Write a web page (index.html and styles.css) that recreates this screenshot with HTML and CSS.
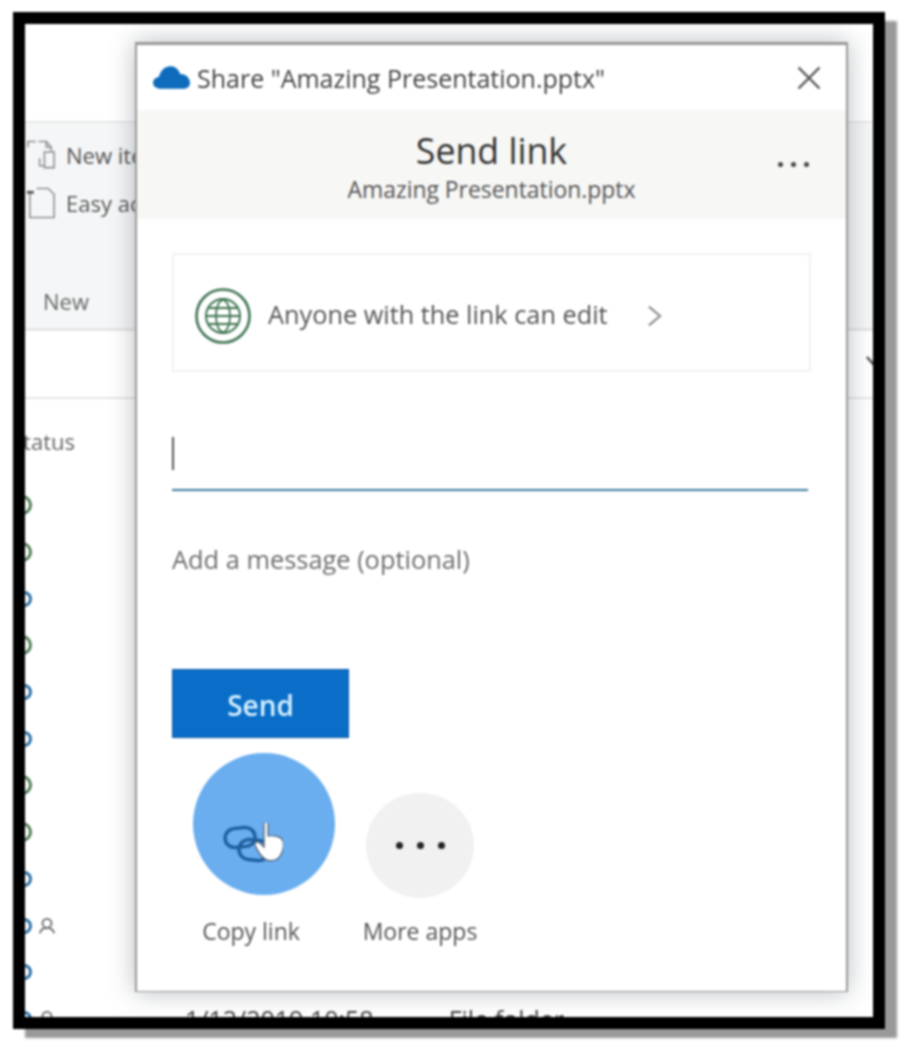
FILE: index.html
```html
<!DOCTYPE html>
<html lang="en">
<head>
<meta charset="utf-8">
<title>Share</title>
<link rel="stylesheet" href="styles.css">
</head>
<body>
<div class="frame">
  <div class="explorer">
    <div class="top-space"></div>
    <section class="ribbon">
      <div class="ribbon-items">
        <div class="ribbon-item">
          <svg class="ribbon-icon" viewBox="0 0 34 34" fill="none" stroke="#8a8f94" stroke-width="1.6"><path d="M3 9V3h8M14 3h8l5 6v4M20 14h10v16H20zM15 20v8h5"/><path d="M22 3v6h5" /></svg>
          <span>New item</span>
        </div>
        <div class="ribbon-item">
          <svg class="ribbon-icon" viewBox="0 0 34 34" fill="none" stroke="#8a8f94" stroke-width="1.6"><path d="M5 7V32H30V8L24 2H12"/><path d="M2 6h7" stroke="#555" stroke-width="3"/></svg>
          <span>Easy access</span>
        </div>
      </div>
      <div class="ribbon-label">New</div>
    </section>
    <div class="path-bar">
      <svg class="path-chevron" viewBox="0 0 20 14" fill="none" stroke="#555" stroke-width="2.6"><path d="M2 2l8 9 8-9"/></svg>
    </div>
    <div class="column-head">Status</div>
    <div class="rows">
      <div class="row"><i class="dot green"></i></div>
      <div class="row"><i class="dot green"></i></div>
      <div class="row"><i class="dot blue"></i></div>
      <div class="row"><i class="dot green"></i></div>
      <div class="row"><i class="dot blue"></i></div>
      <div class="row"><i class="dot blue"></i></div>
      <div class="row"><i class="dot green"></i></div>
      <div class="row"><i class="dot green"></i></div>
      <div class="row"><i class="dot blue"></i></div>
      <div class="row"><i class="dot blue"></i><svg class="person" viewBox="0 0 20 20" fill="none" stroke="#666" stroke-width="2"><circle cx="10" cy="7" r="5"/><path d="M2 18c1-4 4-6 8-6s7 2 8 6"/></svg></div>
      <div class="row"><i class="dot blue"></i></div>
      <div class="row"><i class="dot blue"></i><svg class="person" viewBox="0 0 20 20" fill="none" stroke="#666" stroke-width="2"><circle cx="10" cy="7" r="5"/><path d="M2 18c1-4 4-6 8-6s7 2 8 6"/></svg><span class="row-date">1/12/2019 10:58</span><span class="row-type">File folder</span></div>
    </div>
  </div>

  <div class="dialog">
    <header class="titlebar">
      <svg class="cloud" viewBox="0 0 38 24"><path fill="#0f6cbd" d="M7 24C3 24 0 21 0 18c0-3 2.500-5.500 6-6C8 5 12.500 1 18 1c4.500 0 8 2.500 10 8 5 0 10 3.500 10 9 0 3-2 6-6 6z"/></svg>
      <span class="title-text">Share "Amazing Presentation.pptx"</span>
      <svg class="close" viewBox="0 0 24 24" fill="none" stroke="#555" stroke-width="2.400"><path d="M1.500 1.500l21 21M22.500 1.500l-21 21"/></svg>
    </header>
    <div class="band">
      <div class="band-title">Send link</div>
      <div class="band-sub">Amazing Presentation.pptx</div>
      <div class="band-more"><i></i><i></i><i></i></div>
    </div>
    <main class="body">
      <div class="perm">
        <svg class="globe" viewBox="0 0 56 56" fill="none" stroke="#3f7452"><circle cx="28" cy="28" r="26.500" stroke-width="2.600"/><circle cx="28" cy="28" r="17" stroke-width="2"/><ellipse cx="28" cy="28" rx="7" ry="16" stroke-width="1.800"/><path d="M12 28h32M14 20h28M14 36h28" stroke-width="1.800"/></svg>
        <span class="perm-text">Anyone with the link can edit</span>
        <svg class="perm-chevron" viewBox="0 0 16 24" fill="none" stroke="#8a8a8a" stroke-width="2.200"><path d="M2 2l12 10L2 22"/></svg>
      </div>
      <div class="recipient"><span class="caret"></span></div>
      <div class="message">Add a message (optional)</div>
      <button class="send">Send</button>
      <div class="apps">
        <div class="app app-copy">
          <div class="app-circle circle-copy">
            <svg class="link-icon" viewBox="0 0 60 40" fill="none">
              <rect x="2" y="5" width="30" height="19" rx="9.500" stroke="#1f5f9e" stroke-width="3.500" transform="rotate(-6 17 14)"/>
              <rect x="16" y="17" width="30" height="20" rx="10" stroke="#1f5f9e" stroke-width="3.500" transform="rotate(6 31 27)"/>
              <path fill="#fff" stroke="#4a5a6a" stroke-width="1.200" d="M41 1c0-3 4-3 4 0v12c7-1 14 1 15 5 1 6 0 11-3 15-3 5-11 6-15 3-4-3-8-9-10-14-1-3 3-4 5-2l4 4z"/>
            </svg>
          </div>
          <div class="app-label">Copy link</div>
        </div>
        <div class="app app-more">
          <div class="app-circle circle-more"><i></i><i></i><i></i></div>
          <div class="app-label">More apps</div>
        </div>
      </div>
    </main>
  </div>
</div>
</body>
</html>
```
FILE: styles.css
```css
* { box-sizing: border-box; }
html, body { margin: 0; background: #fff; }
body { font-family: "Open Sans", "Noto Sans", sans-serif; color: #444; height: 1063px; overflow: hidden; padding: 12px 0 0 13px; }

.frame {
  position: relative;
  width: 872px;
  height: 1017px;
  border: 12px solid #000;
  background: #fff;
  box-shadow: 12px 9px 2px #99999a;
  overflow: hidden;
  filter: blur(1px);
}

.explorer { height: 100%; display: flex; flex-direction: column; }
.top-space { height: 97px; flex: none; }

.ribbon {
  height: 210px;
  flex: none;
  background: #f5f6f7;
  border-top: 2px solid #e8e8e8;
  border-bottom: 3px solid #e6e6e6;
  display: flex;
  flex-direction: column;
  justify-content: space-between;
  padding: 14px 0 12px;
}
.ribbon-items { display: flex; flex-direction: column; gap: 12px; }
.ribbon-item { display: flex; align-items: center; gap: 8px; font-size: 22px; color: #555; height: 36px; white-space: nowrap; }
.ribbon-icon { width: 33px; height: 34px; flex: none; }
.ribbon-label { padding-left: 18px; font-size: 22px; color: #666; }

.path-bar {
  height: 68px;
  flex: none;
  border-bottom: 2px solid #e6e6e6;
  display: flex;
  justify-content: flex-end;
  align-items: center;
}
.path-chevron { width: 20px; height: 14px; margin-right: -12px; margin-top: -4px; }

.column-head { margin: 27px 0 0 -14px; font-size: 22px; color: #666; height: 40px; flex: none; }

.rows { margin-left: -12px; padding-top: 16px; }
.row {
  height: 46.700px;
  display: flex;
  align-items: center;
  position: relative;
}
.dot { display: block; flex: none; border-radius: 50%; }
.dot.green { width: 20px; height: 20px; margin-left: -1px; border: 3px solid #4f8058; }
.dot.blue { width: 16px; height: 16px; margin-left: 3px; border: 3px solid #2f72a8; }
.person { width: 18px; height: 18px; margin-left: 6px; flex: none; }
.row-date { margin-left: 129px; font-size: 25px; color: #444; white-space: nowrap; }
.row-type { margin-left: 75px; font-size: 25px; color: #444; white-space: nowrap; }

.dialog {
  position: absolute;
  left: 110px;
  top: 18px;
  width: 713px;
  height: 950px;
  background: #fff;
  border: 2px solid #999;
  border-width: 3px 2px 1px 2px;
  box-shadow: 0 0 24px rgba(60, 70, 80, 0.36);
  display: flex;
  flex-direction: column;
}

.titlebar { height: 65px; flex: none; display: flex; align-items: center; padding: 0 25px 0 16px; }
.cloud { width: 37px; height: 24px; flex: none; margin-right: 7px; margin-top: -2px; }
.title-text { flex: 1; font-size: 25px; color: #444; white-space: nowrap; }
.close { width: 24px; height: 24px; flex: none; margin-top: 0; }

.band {
  height: 109px;
  flex: none;
  background: #f7f7f5;
  position: relative;
  display: flex;
  flex-direction: column;
  align-items: center;
  padding-top: 16px;
}
.band-title { font-size: 35.700px; line-height: 48px; color: #333; }
.band-sub { font-size: 22.900px; line-height: 32px; color: #555; }
.band-more { position: absolute; right: 37px; top: 52px; display: flex; gap: 8px; }
.band-more i { width: 5px; height: 5px; border-radius: 50%; background: #444; }

.body { padding: 34px 35px 0; flex: 1; }

.perm {
  height: 119px;
  border: 2px solid #f2f2f2;
  display: flex;
  align-items: center;
  padding: 6px 0 0 21px;
}
.globe { width: 56px; height: 56px; flex: none; }
.perm-text { margin: -4px 0 0 17px; font-size: 25.300px; color: #555; white-space: nowrap; }
.perm-chevron { width: 15px; height: 24px; margin-left: 39px; flex: none; }

.recipient { height: 119px; border-bottom: 2px solid #3b7a9e; margin-right: 3px; padding-top: 65px; }
.caret { display: block; width: 2px; height: 33px; background: #555; }

.message { margin-top: 50px; font-size: 25.400px; line-height: 36px; color: #6e6e6e; }

.send {
  display: block;
  margin-top: 92px;
  width: 177px;
  height: 69px;
  background: #0a6ec8;
  border: 1px solid #0a5ca6;
  color: #d6f0ff;
  font-family: inherit;
  font-size: 28px;
  font-weight: 600;
  padding: 3px 0 0;
}

.apps { display: flex; align-items: flex-start; margin: 15px 0 0 21px; }
.app { position: relative; display: flex; flex-direction: column; align-items: center; }
.app-copy { width: 142px; height: 190px; }
.app-more { width: 108px; height: 190px; margin-left: 31px; justify-content: flex-start; padding-top: 40px; }
.app-circle { border-radius: 50%; flex: none; display: flex; align-items: center; justify-content: center; }
.circle-copy { width: 142px; height: 142px; background: #6aaef0; padding: 38px 22px 0 0; }
.circle-more { width: 108px; height: 105px; background: #f1f1f1; gap: 14px; }
.circle-more i { width: 7px; height: 7px; border-radius: 50%; background: #222; }
.link-icon { width: 60px; height: 40px; flex: none; }
.app-label { font-size: 23px; color: #555; white-space: nowrap; }
.app-copy .app-label { margin: 20px 0 0 -26px; }
.app-more .app-label { margin-top: 17px; }
```
